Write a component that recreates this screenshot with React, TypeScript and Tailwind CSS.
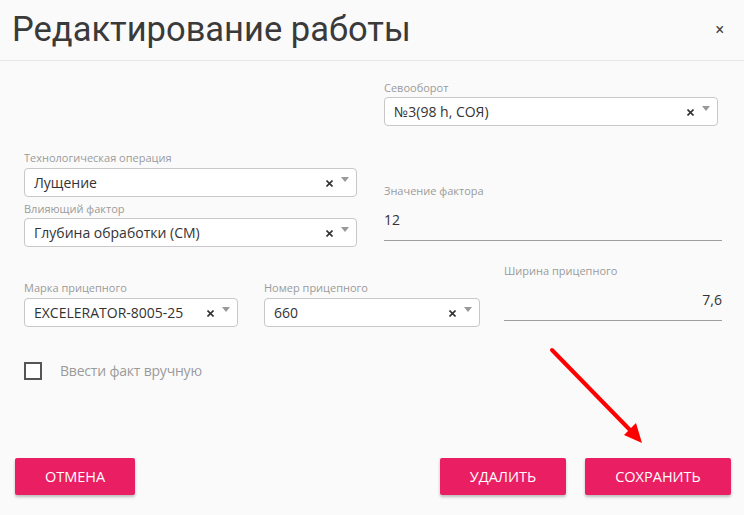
import React from 'react';

const FONT = { fontFamily: '"Open Sans", "Noto Sans", sans-serif' };

function Select({ value, width }: { value: string; width: string }) {
  return (
    <div className={`${width} h-[29px] bg-white border border-[#c8c8c8] rounded-[4px] flex items-center pl-[9px] pr-[7px]`}>
      <span className="flex-1 text-[14px] text-[#333] truncate">{value}</span>
      <svg width="7" height="7" viewBox="0 0 7 7" className="mr-[8px] mt-[1px]">
        <path d="M0.5 0.5 L6.5 6.5 M6.5 0.5 L0.5 6.5" stroke="#333" strokeWidth="1.6" />
      </svg>
      <svg width="8" height="5" viewBox="0 0 8 5" className="-mt-[6px]">
        <polygon points="0,0 8,0 4,5" fill="#999" />
      </svg>
    </div>
  );
}

function Label({ children }: { children: React.ReactNode }) {
  return <div className="text-[11px] leading-[14px] text-[#9a9a9a]">{children}</div>;
}

function Underlined({ value, right }: { value: string; right?: boolean }) {
  return (
    <div className={`border-b border-[#9e9e9e] pt-[12px] pb-[10px] text-[14px] leading-[20px] text-[#333] ${right ? 'text-right' : ''}`}>
      {value}
    </div>
  );
}

export default function App() {
  return (
    <div className="relative w-[744px] h-[515px] bg-[#fafafa] flex flex-col overflow-hidden" style={FONT}>
      {/* Header */}
      <header className="h-[61px] border-b border-[#e6e6e6] flex items-center justify-between pl-[12px] pr-[20px]">
        <h1
          className="text-[34.5px] text-[#3a3a3a] leading-none -mt-[2px]"
          style={{ fontFamily: 'Roboto, "Liberation Sans", sans-serif' }}
        >
          Редактирование работы
        </h1>
        <span className="text-[16px] text-[#444] leading-none" style={{ fontFamily: 'Roboto, sans-serif' }}>
          ×
        </span>
      </header>

      {/* Body */}
      <div className="pl-[24px] pr-[22px]">
        <div className="flex gap-[27px]">
          <div className="w-[333px] shrink-0 pt-[90px]">
            <Label>Технологическая операция</Label>
            <div className="mt-[3px]">
              <Select value="Лущение" width="w-[333px]" />
            </div>
            <div className="mt-[5px]">
              <Label>Влияющий фактор</Label>
            </div>
            <div className="mt-[2px]">
              <Select value="Глубина обработки (СМ)" width="w-[333px]" />
            </div>
          </div>
          <div className="w-[338px] shrink-0 pt-[20px]">
            <Label>Севооборот</Label>
            <div className="mt-[2px]">
              <Select value="№3(98 h, СОЯ)" width="w-[334px]" />
            </div>
            <div className="mt-[58px]">
              <Label>Значение фактора</Label>
              <Underlined value="12" />
            </div>
          </div>
        </div>

        <div className="flex items-start mt-[17px]">
          <div className="w-[214px] shrink-0 pt-[17px]">
            <Label>Марка прицепного</Label>
            <div className="mt-[3px]">
              <Select value="EXCELERATOR-8005-25" width="w-[214px]" />
            </div>
          </div>
          <div className="w-[216px] shrink-0 ml-[26px] pt-[17px]">
            <Label>Номер прицепного</Label>
            <div className="mt-[3px]">
              <Select value="660" width="w-[216px]" />
            </div>
          </div>
          <div className="w-[218px] shrink-0 ml-[24px]">
            <Label>Ширина прицепного</Label>
            <Underlined value="7,6" right />
          </div>
        </div>

        <label className="flex items-center mt-[33px]">
          <span className="w-[18px] h-[18px] border-2 border-[#555] bg-white" />
          <span className="ml-[18px] text-[14px] text-[#9a9a9a] tracking-[-0.2px]">Ввести факт вручную</span>
        </label>
      </div>

      {/* Footer */}
      <div className="mt-auto pb-[20px] pl-[15px] pr-[13px] flex justify-between">
        <button className="w-[120px] h-[37px] bg-[#e91e63] text-white text-[14.5px] rounded-[2px] shadow-[0_2px_3px_rgba(0,0,0,0.25)]">
          ОТМЕНА
        </button>
        <div className="flex gap-[19px]">
          <button className="w-[126px] h-[37px] bg-[#e91e63] text-white text-[14.5px] rounded-[2px] shadow-[0_2px_3px_rgba(0,0,0,0.25)]">
            УДАЛИТЬ
          </button>
          <button className="w-[146px] h-[37px] bg-[#e91e63] text-white text-[14.5px] rounded-[2px] shadow-[0_2px_3px_rgba(0,0,0,0.25)]">
            СОХРАНИТЬ
          </button>
        </div>
      </div>

      {/* Annotation arrow */}
      <svg className="absolute left-0 top-0 pointer-events-none" width="744" height="515">
        <line x1="552" y1="350" x2="630" y2="430" stroke="#ff0000" strokeWidth="4" strokeLinecap="round" />
        <polygon points="642,443 624,435 636,423" fill="#ff0000" />
      </svg>
    </div>
  );
}
